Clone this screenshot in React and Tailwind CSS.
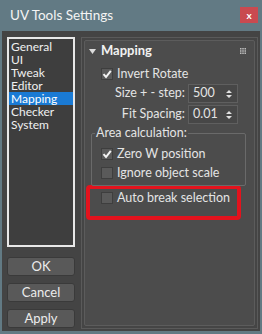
import React from 'react';

const font = { fontFamily: 'Lato, "Noto Sans", sans-serif' };

const Check = ({ checked }) => (
  <span className="w-[12px] h-[12px] bg-[#5a5a5a] border border-[#3e3e3e] flex items-center justify-center shrink-0">
    {checked && (
      <svg width="10" height="10" viewBox="0 0 10 10">
        <path d="M1.5 5.2 L4 8 L8.8 1.8" stroke="#f2f2f2" strokeWidth="2" fill="none" />
      </svg>
    )}
  </span>
);

const Spinner = ({ value }) => (
  <div className="w-[50px] h-[19px] bg-[#474747] border border-[#5f5f5f] flex items-center justify-between pl-[4px] pr-[5px]">
    <span>{value}</span>
    <svg width="6" height="10" viewBox="0 0 6 10">
      <path d="M0 4 L3 1 L6 4 Z M0 6 L3 9 L6 6 Z" fill="#e0e0e0" />
    </svg>
  </div>
);

const items = ['General', 'UI', 'Tweak', 'Editor', 'Mapping', 'Checker', 'System'];

export default function App() {
  return (
    <div className="w-[262px] h-[334px] bg-[#627a84] flex flex-col text-[12.5px] text-[#e4e4e4]" style={font}>
      {/* Title bar */}
      <div className="h-[31px] flex items-center justify-between pl-[10px] pr-[4px] shrink-0">
        <span className="text-[13.5px] text-[#f4f4f4]">UV Tools Settings</span>
        <div className="w-[18px] h-[16px] bg-[#c94a50] flex items-center justify-center text-[10px] text-white font-bold leading-none mb-[1px]">
          x
        </div>
      </div>

      {/* Body */}
      <div className="flex-1 mx-[2px] mb-[3px] bg-[#444444] flex gap-[6px] pl-[5px] pr-[2px] pt-[6px] pb-[2px]">
        {/* Left column */}
        <div className="w-[68px] flex flex-col">
          <div className="h-[210px] border-2 border-[#e8e8e8] bg-[#3e3e3e] pt-[1px]">
            {items.map((it) => (
              <div
                key={it}
                className={`h-[13px] leading-[13px] pl-[2px] text-[12px] overflow-hidden ${it === 'Mapping' ? 'bg-[#1a7ad4] text-white' : 'text-[#f0f0f0]'}`}
              >
                {it}
              </div>
            ))}
          </div>
          <div className="flex flex-col gap-[7px] mt-[10px]">
            {['OK', 'Cancel', 'Apply'].map((b) => (
              <button
                key={b}
                className="h-[19px] rounded-[3px] bg-[#595959] border border-[#3a3a3a] text-[#ececec] text-[13px] leading-none"
              >
                {b}
              </button>
            ))}
          </div>
        </div>

        {/* Right panel */}
        <div className="flex-1 border border-[#5a5a5a] bg-[#454545] p-[2px] flex">
          <div className="flex-1 border border-[#5c5c5c] rounded-[2px] bg-[#4c4c4c] flex flex-col">
            {/* Rollout header */}
            <div className="h-[18px] mt-[1px] flex items-center pl-[4px] pr-[8px]">
              <svg width="7" height="5" viewBox="0 0 7 5" className="mr-[5px]">
                <path d="M0 0 L7 0 L3.5 5 Z" fill="#dcdcdc" />
              </svg>
              <span className="font-bold text-[#f2f2f2] text-[13px]">Mapping</span>
              <svg width="6" height="6" viewBox="0 0 6 6" className="ml-auto">
                <g fill="#bdbdbd">
                  <rect x="0" y="0" width="1.5" height="1.5" />
                  <rect x="2.25" y="0" width="1.5" height="1.5" />
                  <rect x="4.5" y="0" width="1.5" height="1.5" />
                  <rect x="0" y="2.25" width="1.5" height="1.5" />
                  <rect x="2.25" y="2.25" width="1.5" height="1.5" />
                  <rect x="4.5" y="2.25" width="1.5" height="1.5" />
                  <rect x="0" y="4.5" width="1.5" height="1.5" />
                  <rect x="2.25" y="4.5" width="1.5" height="1.5" />
                  <rect x="4.5" y="4.5" width="1.5" height="1.5" />
                </g>
              </svg>
            </div>

            {/* Invert Rotate */}
            <div className="flex items-center gap-[4px] pl-[16px] mt-[7px] h-[14px]">
              <Check checked />
              <span>Invert Rotate</span>
            </div>

            {/* Spinners */}
            <div className="flex items-center justify-end gap-[3px] pr-[16px] mt-[3px]">
              <span>Size + - step:</span>
              <Spinner value="500" />
            </div>
            <div className="flex items-center justify-end gap-[3px] pr-[16px] mt-[2px]">
              <span>Fit Spacing:</span>
              <Spinner value="0.01" />
            </div>

            {/* Group box */}
            <div className="relative ml-[6px] mr-[8px] mt-[9px] h-[53px] border border-[#6a6a6a] rounded-[2px] pt-[13px] pl-[9px] flex flex-col gap-[5px]">
              <span className="absolute -top-[9px] left-[3px] bg-[#4c4c4c] px-[1px] leading-[16px]">
                Area calculation:
              </span>
              <div className="flex items-center gap-[4px] h-[14px]">
                <Check checked />
                <span>Zero W position</span>
              </div>
              <div className="flex items-center gap-[4px] h-[14px]">
                <Check />
                <span>Ignore object scale</span>
              </div>
            </div>

            {/* Highlighted option */}
            <div className="ml-[1px] mr-[13px] -mt-[1px] h-[35px] border-[4px] border-[#e3131d] rounded-[4px] flex items-start pl-[11px] pt-[2px]">
              <div className="flex items-center gap-[4px] h-[14px]">
                <Check />
                <span>Auto break selection</span>
              </div>
            </div>
          </div>
        </div>
      </div>
    </div>
  );
}
